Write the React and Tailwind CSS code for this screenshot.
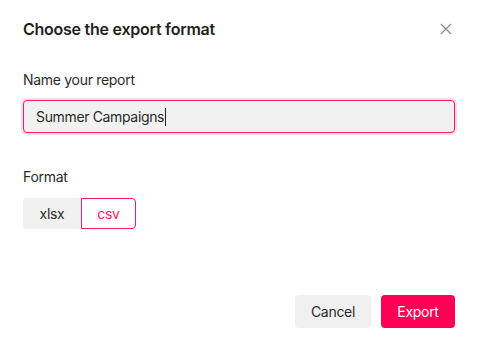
import React from "react";

const formats = ["xlsx", "csv"];

export default function App() {
  const selected = "csv";

  return (
    <main className="min-h-screen bg-white font-['Inter',sans-serif] text-[#222222]">
      <div className="flex flex-col pl-[23px] pr-[22px] pt-[17px]">
        <header className="flex items-center justify-between">
          <h2 className="text-[16px] font-semibold leading-[24px] tracking-[-0.25px] text-[#1f1f1f]">
            Choose the export format
          </h2>
          <button className="mr-[2px] flex h-[14px] w-[14px] items-center justify-center text-[#8c8c8c]">
            <svg width="12" height="12" viewBox="0 0 12 12" fill="none">
              <path d="M1 1L11 11M11 1L1 11" stroke="currentColor" strokeWidth="1.2" />
            </svg>
          </button>
        </header>

        <label className="mt-[29px] block">
          <span className="block text-[14px] leading-[20px] tracking-[-0.3px] text-[#2a2a2a]">
            Name your report
          </span>
          <div className="mt-[10px] flex h-[33px] items-center rounded-[4px] border border-[#ff1a60] bg-[#f1f1f1] px-[12px] text-[14px] tracking-[-0.35px] text-[#2a2a2a] shadow-[0_0_0_2px_#ffdce7]">
            Summer Campaigns
            <span className="ml-[1px] inline-block h-[18px] w-px bg-[#222222]" />
          </div>
        </label>

        <div className="mt-[34px]">
          <span className="block text-[14px] leading-[20px] tracking-[-0.3px] text-[#2a2a2a]">Format</span>
          <div className="mt-[11px] flex">
            {formats.map((format) =>
              format === selected ? (
                <button
                  key={format}
                  className="h-[31px] w-[55px] rounded-r-[4px] border border-[#ff1a60] bg-white text-[14px] tracking-[-0.3px] text-[#ff1a60]"
                >
                  {format}
                </button>
              ) : (
                <button
                  key={format}
                  className="h-[31px] w-[58px] rounded-l-[4px] bg-[#f1f1f1] text-[14px] tracking-[-0.3px] text-[#2a2a2a]"
                >
                  {format}
                </button>
              )
            )}
          </div>
        </div>

        <footer className="mt-[66px] flex justify-end gap-[10px]">
          <button className="h-[33px] w-[76px] rounded-[4px] bg-[#f0f0f0] text-[14px] tracking-[-0.3px] text-[#2a2a2a]">
            Cancel
          </button>
          <button className="h-[33px] w-[74px] rounded-[4px] bg-[#ff0054] text-[14px] tracking-[-0.3px] text-white">
            Export
          </button>
        </footer>
      </div>
    </main>
  );
}
